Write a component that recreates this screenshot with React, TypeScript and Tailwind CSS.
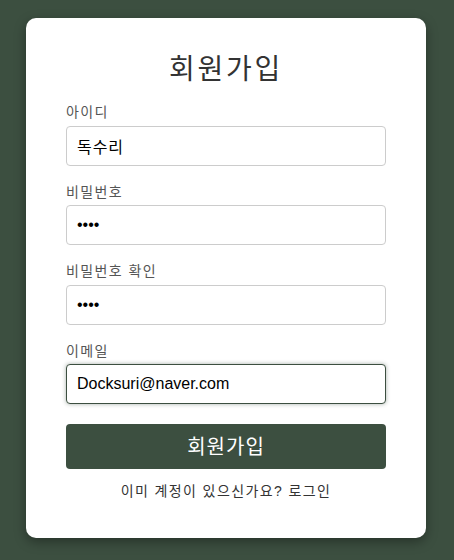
import { useState } from "react";

const font = "font-['Liberation_Sans','Noto_Sans_CJK_KR',sans-serif]";

function Field({
  label,
  type,
  value,
  focused,
  ko,
}: {
  label: string;
  type: string;
  value: string;
  focused?: boolean;
  ko?: boolean;
}) {
  const [v, setV] = useState(value);
  const base =
    "h-10 w-full rounded-[4px] border bg-white px-[10px] text-[16px] text-black outline-none";
  return (
    <div className="mb-4 flex flex-col">
      <label className="mb-[3.5px] text-[14px] leading-[20px] tracking-[0.1em] text-[#555]">
        {label}
      </label>
      <input
        type={type}
        value={v}
        onChange={(e) => setV(e.target.value)}
        className={
          focused
            ? `${base} border-[#3c4f40] shadow-[0_0_4px_rgba(60,79,64,0.45)]`
            : `${base} border-[#ccc] ${ko ? "tracking-[0.06em]" : ""}`
        }
      />
    </div>
  );
}

export default function App() {
  return (
    <div className={`flex min-h-screen justify-center bg-[#3c4f40] pr-[2px] pt-[18px] ${font}`}>
      <div className="h-[520px] w-[400px] rounded-[10px] bg-white px-10 pt-8 shadow-[0_4px_12px_rgba(0,0,0,0.35)]">
        <h1 className="mb-3 text-center text-[28px] leading-[40px] tracking-[0.1em] text-[#333]">
          회원가입
        </h1>
        <form onSubmit={(e) => e.preventDefault()}>
          <Field label="아이디" type="text" value="독수리" ko />
          <Field label="비밀번호" type="password" value="1234" />
          <Field label="비밀번호 확인" type="password" value="1234" />
          <Field label="이메일" type="email" value="Docksuri@naver.com" focused />
          <button
            type="submit"
            className="mt-1 h-[45px] w-full rounded-[4px] bg-[#3c4f40] text-[20px] tracking-[0.05em] text-white"
          >
            회원가입
          </button>
        </form>
        <p className="mt-3 text-center text-[14px] leading-[20px] tracking-[0.1em] text-[#333]">
          이미 계정이 있으신가요? 로그인
        </p>
      </div>
    </div>
  );
}
